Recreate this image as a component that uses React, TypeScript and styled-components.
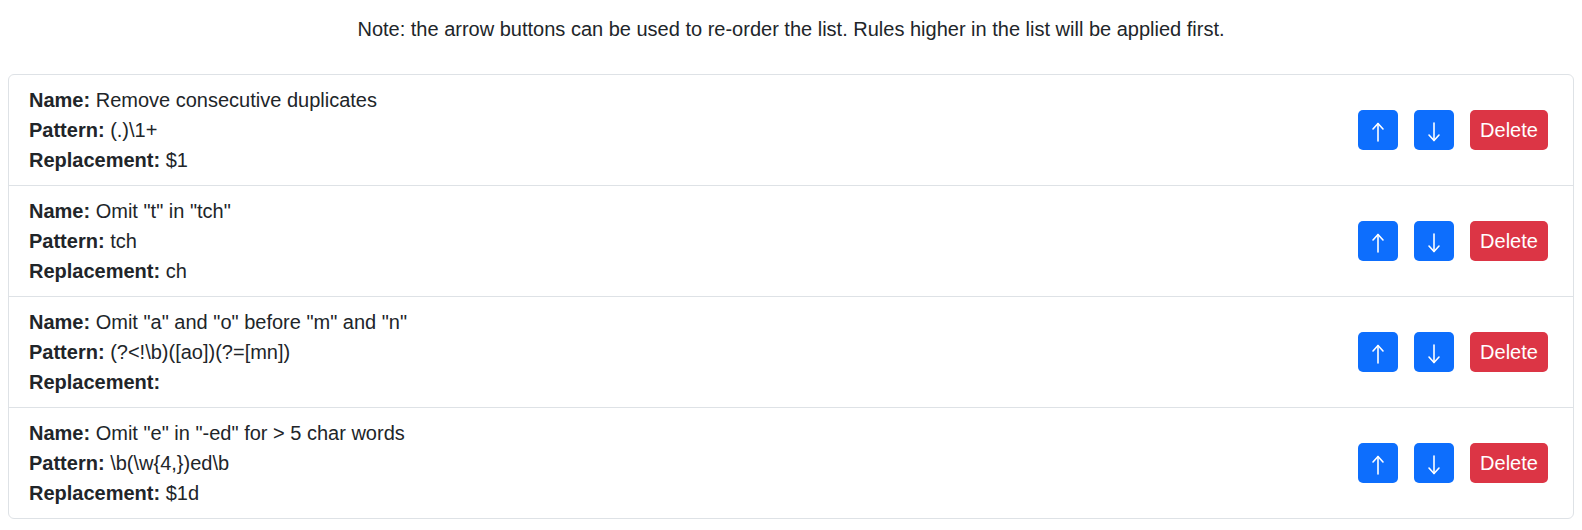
import React from "react";
import styled, { createGlobalStyle } from "styled-components";

const GlobalStyle = createGlobalStyle`
  html, body {
    margin: 0;
    padding: 0;
    background: #fff;
  }
  body {
    font-family: "Liberation Sans", Arial, sans-serif;
    font-size: 20px;
    line-height: 30px;
    color: #212529;
  }
  * { box-sizing: border-box; }
`;

const Page = styled.div`
  padding: 14px 8px 11px;
`;

const Note = styled.p`
  margin: 0 0 30px;
  text-align: center;
  font-size: 20px;
  line-height: 30px;
`;

const List = styled.ul`
  list-style: none;
  margin: 0;
  padding: 0;
  border: 1px solid #dee2e6;
  border-radius: 6px;
  overflow: hidden;
`;

const Row = styled.li`
  display: flex;
  align-items: center;
  justify-content: space-between;
  padding: 10px 25px 10px 20px;
  & + & {
    border-top: 1px solid #dee2e6;
  }
`;

const Info = styled.div`
  display: flex;
  flex-direction: column;
`;

const Line = styled.div`
  height: 30px;
  line-height: 30px;
  white-space: pre;
`;

const Label = styled.strong`
  font-weight: 700;
`;

const Actions = styled.div`
  display: flex;
  gap: 16px;
`;

const Button = styled.button<{ $variant: "primary" | "danger"; $square?: boolean }>`
  height: 40px;
  width: ${(p) => (p.$square ? "40px" : "78px")};
  padding: 0;
  display: inline-flex;
  align-items: center;
  justify-content: center;
  border: none;
  border-radius: 5px;
  font-family: "Liberation Sans", Arial, sans-serif;
  font-size: 20px;
  line-height: 30px;
  color: #fff;
  background: ${(p) => (p.$variant === "primary" ? "#0d6efd" : "#dc3545")};
  cursor: pointer;
  svg {
    display: block;
  }
`;

const Arrow = ({ dir }: { dir: "up" | "down" }) => (
  <svg width="40" height="40" viewBox="0 0 40 40" fill="none" stroke="#fff" strokeWidth="1.6" strokeLinecap="round" strokeLinejoin="round">
    {dir === "up" ? (
      <>
        <line x1="20" y1="13.5" x2="20" y2="31" />
        <polyline points="15,19 20,13.5 25,19" />
      </>
    ) : (
      <>
        <line x1="20" y1="13" x2="20" y2="30.5" />
        <polyline points="15,25 20,30.5 25,25" />
      </>
    )}
  </svg>
);

const rules = [
  { name: "Remove consecutive duplicates", pattern: "(.)\\1+", replacement: "$1" },
  { name: 'Omit "t" in "tch"', pattern: "tch", replacement: "ch" },
  { name: 'Omit "a" and "o" before "m" and "n"', pattern: "(?<!\\b)([ao])(?=[mn])", replacement: "" },
  { name: 'Omit "e" in "-ed" for > 5 char words', pattern: "\\b(\\w{4,})ed\\b", replacement: "$1d" },
];

export default function App() {
  return (
    <>
      <GlobalStyle />
      <Page>
        <Note>
          Note: the arrow buttons can be used to re-order the list. Rules higher in the list will be applied first.
        </Note>
        <List>
          {rules.map((r, i) => (
            <Row key={i}>
              <Info>
                <Line>
                  <Label>Name:</Label> {r.name}
                </Line>
                <Line>
                  <Label>Pattern:</Label> {r.pattern}
                </Line>
                <Line>
                  <Label>Replacement:</Label> {r.replacement}
                </Line>
              </Info>
              <Actions>
                <Button $variant="primary" $square aria-label="Move up">
                  <Arrow dir="up" />
                </Button>
                <Button $variant="primary" $square aria-label="Move down">
                  <Arrow dir="down" />
                </Button>
                <Button $variant="danger">Delete</Button>
              </Actions>
            </Row>
          ))}
        </List>
      </Page>
    </>
  );
}
